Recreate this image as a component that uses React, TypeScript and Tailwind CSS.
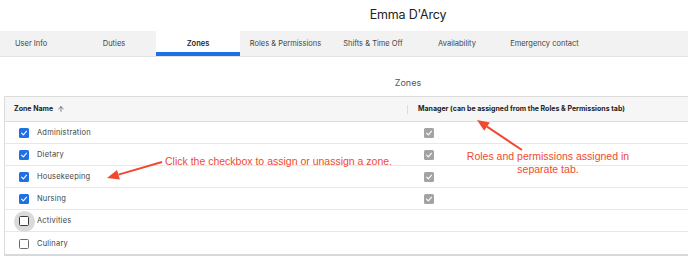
import { ArrowUp } from "lucide-react";

const tabs = [
  { label: "User Info", w: "w-[72px] justify-start pl-[15px]" },
  { label: "Duties", w: "w-[84px] justify-center" },
  { label: "Zones", w: "w-[84px] justify-center", active: true },
  { label: "Roles & Permissions", w: "w-[91px] justify-center" },
  { label: "Shifts & Time Off", w: "w-[84px] justify-center" },
  { label: "Availability", w: "w-[84px] justify-center" },
  { label: "Emergency contact", w: "w-[91px] justify-center" },
];

const zones = [
  { name: "Administration", assigned: true, manager: true },
  { name: "Dietary", assigned: true, manager: true },
  { name: "Housekeeping", assigned: true, manager: true },
  { name: "Nursing", assigned: true, manager: true },
  { name: "Activities", assigned: false, manager: false, focus: true },
  { name: "Culinary", assigned: false, manager: false },
];

function Check({ color }: { color: string }) {
  return (
    <span className={`w-[10px] h-[10px] rounded-[1.5px] flex items-center justify-center ${color}`}>
      <svg width="8" height="8" viewBox="0 0 10 10" fill="none">
        <path d="M2 5.2 L4.2 7.3 L8.2 2.8" stroke="white" strokeWidth="1.4" strokeLinecap="round" strokeLinejoin="round" />
      </svg>
    </span>
  );
}

function Empty({ dark }: { dark?: boolean }) {
  return (
    <span
      className={`w-[10px] h-[10px] rounded-[1.5px] border-[1.5px] bg-white ${
        dark ? "border-[#3a3a3a]" : "border-[#6b6b6b]"
      }`}
    />
  );
}

export default function App() {
  return (
    <div className="relative w-[688px] h-[266px] bg-white overflow-hidden font-['Inter',sans-serif]">
      {/* Titulo */}
      <div className="h-[31px] flex items-center justify-center pl-[128px]">
        <span className="text-[12.5px] text-[#222] tracking-[-0.2px]">Emma D'Arcy</span>
      </div>

      {/* Abas */}
      <div className="h-[26px] flex bg-[#f2f2f2] border-b border-[#e3e3e3]">
        {tabs.map((t) => (
          <div
            key={t.label}
            className={`relative flex items-center h-full text-[7.5px] ${t.w} ${
              t.active ? "bg-white font-semibold text-[#222]" : "text-[#444]"
            }`}
          >
            {t.label}
            {t.active && <span className="absolute left-0 right-0 bottom-0 h-[4px] bg-[#1f6fe5]" />}
          </div>
        ))}
      </div>

      <div className="h-[39px] flex justify-center pl-[128px] pt-[21px]">
        <span className="text-[9px] leading-[10px] text-[#555]">Zones</span>
      </div>

      {/* Tabela */}
      <div className="ml-[4px] border-t border-l border-b-2 border-[#dcdcdc] border-b-[#d9d9dd]">
        <div className="h-[25px] flex items-center bg-[#f6f6f6] border-b border-[#dedede] text-[7px] font-bold text-[#222]">
          <div className="w-[402px] flex items-center gap-[4px] pl-[9px]">
            Zone Name
            <ArrowUp size={8} strokeWidth={2} className="text-[#444]" />
          </div>
          <span className="w-px h-[9px] bg-[#dcdcdc]" />
          <div className="pl-[10px]">Manager (can be assigned from the Roles &amp; Permissions tab)</div>
        </div>
        {zones.map((z) => (
          <div key={z.name} className="h-[22px] flex items-center border-b border-[#e8e8ec] last:border-b-0 text-[7.5px] tracking-[0.2px] text-[#444]">
            <div className="w-[403px] flex items-center gap-[8px] pl-[14px] pt-px">
              <span className="relative flex items-center justify-center">
                {z.focus && <span className="absolute w-[21px] h-[21px] rounded-full bg-[#dadada]" />}
                <span className="relative flex">
                  {z.assigned ? <Check color="bg-[#1f6fe5]" /> : <Empty dark={z.focus} />}
                </span>
              </span>
              {z.name}
            </div>
            <div className="pl-[16px] flex pt-px">{z.manager && <Check color="bg-[#a3a3a3]" />}</div>
          </div>
        ))}
      </div>

      {/* Anotacoes */}
      <svg className="absolute left-0 top-0 pointer-events-none" width="688" height="266">
        <line x1="162" y1="162" x2="118.5" y2="174.6" stroke="#ef4a2f" strokeWidth="2" />
        <polygon points="107,178 119.9,179.5 117.1,169.9" fill="#ef4a2f" />
        <line x1="522" y1="150" x2="487" y2="126.7" stroke="#ef4a2f" strokeWidth="2" />
        <polygon points="477,120 489.8,122.5 484.2,130.8" fill="#ef4a2f" />
      </svg>
      <div className="absolute left-[165px] top-[155px] text-[10.5px] leading-[12px] text-[#ef4a2f] font-['Liberation_Sans',Arial,sans-serif] whitespace-nowrap">
        Click the checkbox to assign or unassign a zone.
      </div>
      <div className="absolute left-[448px] top-[150px] w-[200px] text-center text-[10.5px] leading-[13px] text-[#ef4a2f] font-['Liberation_Sans',Arial,sans-serif]">
        Roles and permissions assigned in
        <br />
        separate tab.
      </div>
    </div>
  );
}
